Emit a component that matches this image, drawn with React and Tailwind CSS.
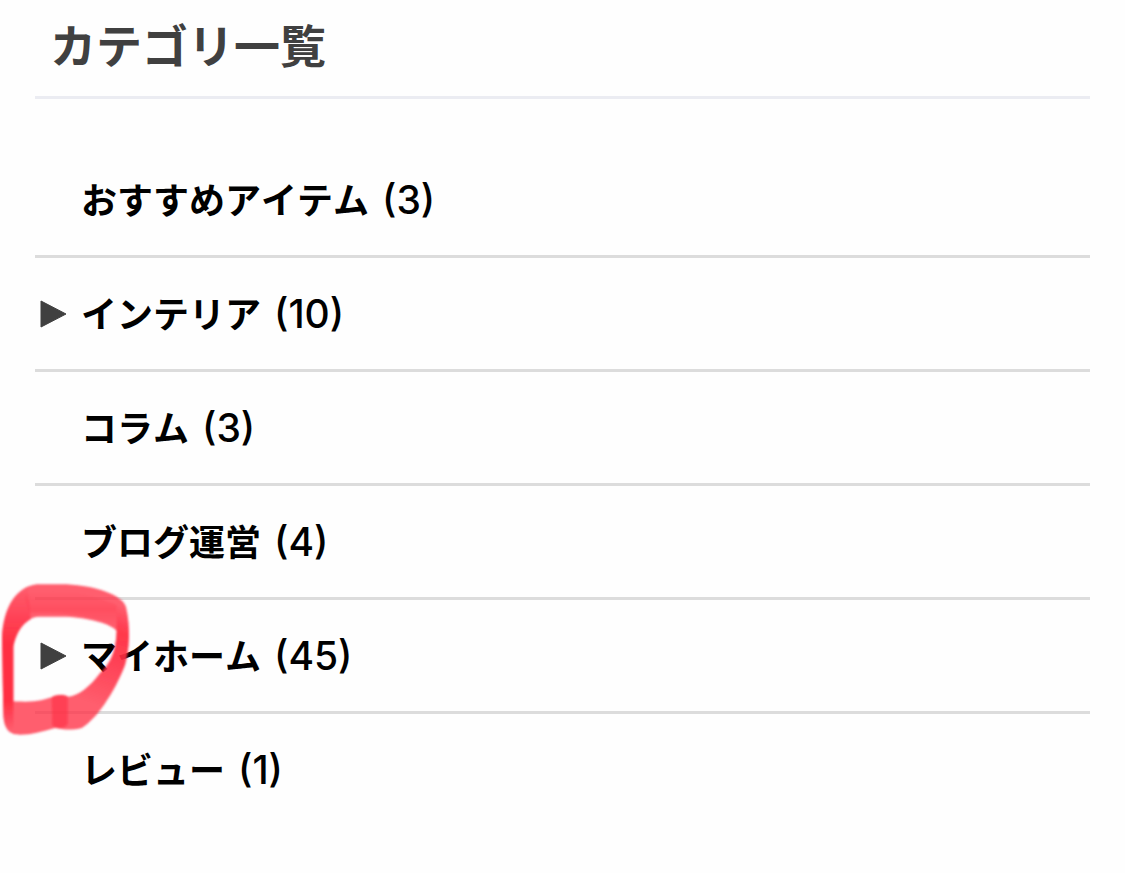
import React, { useState } from 'react';

const categories = [
  { name: 'おすすめアイテム', count: 3 },
  { name: 'インテリア', count: 10, hasChildren: true },
  { name: 'コラム', count: 3 },
  { name: 'ブログ運営', count: 4 },
  { name: 'マイホーム', count: 45, hasChildren: true, marked: true },
  { name: 'レビュー', count: 1 },
];

// Hand-drawn red marker loop around the toggle
function MarkerLoop() {
  return (
    <svg
      className="pointer-events-none absolute -top-5 -left-9 h-[160px] w-[136px]"
      viewBox="0 0 408 480"
      aria-hidden="true"
    >
      <defs>
        <linearGradient id="left" x1="0" y1="0" x2="0" y2="1">
          <stop offset="0" stopColor="#ff2e42" stopOpacity="0" />
          <stop offset="0.4" stopColor="#ff2e42" />
          <stop offset="0.8" stopColor="#ff2e42" />
          <stop offset="1" stopColor="#ff2e42" stopOpacity="0" />
        </linearGradient>
        <linearGradient
          id="right"
          gradientUnits="userSpaceOnUse"
          x1="370"
          y1="110"
          x2="270"
          y2="400"
        >
          <stop offset="0" stopColor="#ff2e42" stopOpacity="0" />
          <stop offset="0.25" stopColor="#ff2e42" stopOpacity="0.8" />
          <stop offset="0.5" stopColor="#ff2e42" stopOpacity="0.6" />
          <stop offset="1" stopColor="#ff2e42" stopOpacity="0" />
        </linearGradient>
        <linearGradient id="band" x1="0" y1="0" x2="0" y2="1">
          <stop offset="0" stopColor="#ff2e42" stopOpacity="0" />
          <stop offset="0.5" stopColor="#ff2e42" stopOpacity="0.3" />
          <stop offset="1" stopColor="#ff2e42" stopOpacity="0" />
        </linearGradient>
        <filter id="soft" x="-5%" y="-5%" width="110%" height="110%">
          <feGaussianBlur stdDeviation="3" />
        </filter>
      </defs>
      <g filter="url(#soft)" transform="translate(3 -30)">
        <path
          fill="#ff3045"
          fillOpacity="0.78"
          fillRule="evenodd"
          d="M6 200C10 110 50 50 110 43L200 43C290 48 365 75 378 110C392 170 388 240 375 285C350 350 300 440 245 474C215 482 185 478 165 474C120 486 100 494 60 494C30 494 12 480 10 435ZM40 230C50 180 80 142 115 140L200 140C270 145 330 160 350 182C348 240 335 275 300 310C270 350 235 378 205 380C190 372 165 374 155 382C130 390 110 398 40 394Z"
        />
        <path
          fill="url(#left)"
          d="M6 200C12 120 42 68 84 50L92 148C64 164 48 190 40 230L40 480C20 482 12 465 10 435Z"
        />
        <path
          fill="url(#right)"
          d="M350 90C368 92 378 104 380 120C392 180 388 240 375 285C350 350 300 440 245 474L205 380C235 378 270 350 300 310C335 275 348 240 350 182Z"
        />
        <path
          fill="url(#band)"
          d="M70 75C150 50 260 65 350 105L350 175C290 130 150 125 90 130Z"
        />
        <path
          fill="#ff3045"
          fillOpacity="0.65"
          d="M155 382C165 372 195 372 203 380L203 462C195 476 168 478 157 466Z"
        />
      </g>
    </svg>
  );
}

function CategoryRow({ category }) {
  const [open, setOpen] = useState(false);

  return (
    <li className="relative flex h-[114px] items-center border-b-3 border-[#dcdcdc] last:h-[111px] last:border-b-0">
      <div className="flex w-[46px] shrink-0 pl-1">
        {category.hasChildren && (
          <button
            type="button"
            aria-label={category.name}
            aria-expanded={open}
            onClick={() => setOpen(!open)}
          >
            <svg className="h-7 w-7" viewBox="0 0 28 28" aria-hidden="true">
              <path
                d="M2 1L27 14L2 27Z"
                fill="#404040"
                stroke="#404040"
                strokeLinejoin="round"
              />
            </svg>
          </button>
        )}
      </div>
      <a
        href="#"
        className="flex items-baseline gap-[13px] text-[36px] leading-none font-bold text-black [font-kerning:none]"
      >
        <span>{category.name}</span>
        <span className="text-[39px] font-medium">({category.count})</span>
      </a>
      {category.marked && <MarkerLoop />}
    </li>
  );
}

export default function App() {
  return (
    <main className="min-h-screen bg-[#fefefe] px-[35px] font-['Inter','Noto_Sans_CJK_JP',sans-serif]">
      <h2 className="mb-[45px] border-b-3 border-[#ebecf2] px-[15px] pt-[23px] pb-[27px] text-[46px] leading-[46px] font-bold text-[#404040]">
        カテゴリ一覧
      </h2>
      <ul>
        {categories.map((category) => (
          <CategoryRow key={category.name} category={category} />
        ))}
      </ul>
    </main>
  );
}
